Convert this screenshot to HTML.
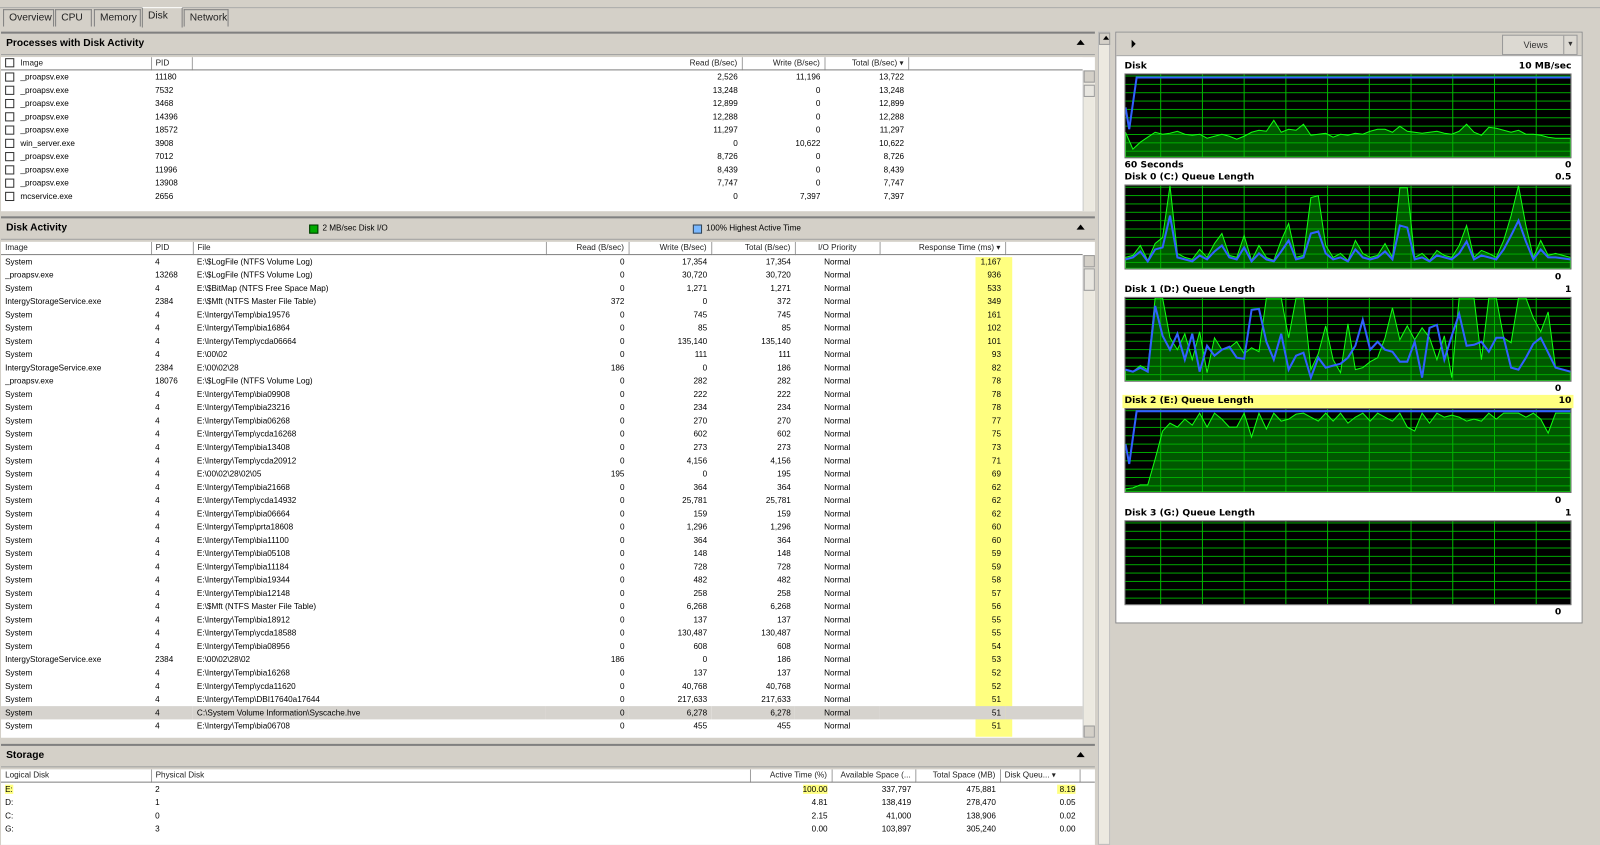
<!DOCTYPE html><html><head><meta charset="utf-8"><style>
*{box-sizing:border-box;margin:0;padding:0}
html,body{width:1600px;height:845px;overflow:hidden;background:#d4d0c8}
#w{position:absolute;left:0;top:0;width:1568px;height:828px;transform:scale(1.0204);transform-origin:0 0;font-family:"Liberation Sans",sans-serif;font-size:8px;color:#000}
.a{position:absolute}
.tab{position:absolute;top:9px;height:17px;border:1px solid #808080;border-bottom:none;background:#d4d0c8;font-size:10px;line-height:16px;padding-left:5px;color:#222}
.ph{position:absolute;left:1px;width:1072px;height:23px;background:#d4d0c8;border-top:2px solid #808080;border-bottom:1px solid #a0a0a0;font-weight:bold;font-size:10px;line-height:20px;padding-left:5px}
.ph .up{position:absolute;right:10px;top:6px;width:0;height:0;border-left:4px solid transparent;border-right:4px solid transparent;border-bottom:5px solid #000}
.box{position:absolute;left:1px;width:1072px;background:#fff;overflow:hidden}
table{border-collapse:collapse;table-layout:fixed;font-size:8px}
td{height:13px;line-height:13px;white-space:nowrap;overflow:hidden;padding:0 4px}
.ch td{background:#fff;border-right:1px solid #a0a0a0;border-bottom:1px solid #808080;height:12px;line-height:11px;color:#222}
.r{text-align:right}.c{text-align:center}
.cb{display:inline-block;width:9px;height:9px;border:1px solid #333;vertical-align:-2px;margin-right:6px;background:#fff}
.sb{position:absolute;width:12px;background:#ece9e0;border-left:1px solid #ccc}
.sbb{position:absolute;left:0;width:11px;height:12px;background:#d4d0c8;border:1px solid #999}
.hl{background:#ffff80}
.gl{position:absolute;left:1102px;font-weight:bold;font-size:9px;font-family:"DejaVu Sans",sans-serif;width:438px}
.gl span{position:absolute;right:0}
.g{position:absolute;left:1102px;width:438px;height:83px;background-color:#000;border:1px solid #777;
background-image:linear-gradient(90deg,#0b0 1px,transparent 1px),linear-gradient(#0a0 1px,transparent 1px);
background-size:40.9px 100%,100% 8.2px;background-position:34px 0,0 1px}
.g svg{position:absolute;left:0;top:0;width:100%;height:100%}
</style></head><body><div id="w">
<div class="a" style="left:0;top:0;width:1568px;height:8px;background:#d4d0c8;border-bottom:1px solid #aaa"></div>
<div class="tab" style="left:3px;width:50px">Overview</div>
<div class="tab" style="left:54px;width:36px">CPU</div>
<div class="tab" style="left:92px;width:46px">Memory</div>
<div class="tab" style="left:139px;width:40px;top:7px;height:20px;border-color:#fff #808080;background:#d4d0c8">Disk</div>
<div class="tab" style="left:180px;width:44px">Network</div>

<!-- Processes -->
<div class="ph" style="top:31px">Processes with Disk Activity<div class="up"></div></div>
<div class="box" style="top:56px;height:151px">
<table style="width:1060px"><colgroup><col style="width:147px"><col style="width:40px"><col style="width:539px"><col style="width:81px"><col style="width:82px"><col style="width:171px"></colgroup>
<tr class="ch"><td><span class="cb"></span>Image</td><td>PID</td><td class="r">Read (B/sec)</td><td class="r">Write (B/sec)</td><td class="r">Total (B/sec) ▾</td><td style="border-right:none"></td></tr>
<tr><td><span class="cb"></span>_proapsv.exe</td><td>11180</td><td class="r">2,526</td><td class="r">11,196</td><td class="r">13,722</td><td></td></tr>
<tr><td><span class="cb"></span>_proapsv.exe</td><td>7532</td><td class="r">13,248</td><td class="r">0</td><td class="r">13,248</td><td></td></tr>
<tr><td><span class="cb"></span>_proapsv.exe</td><td>3468</td><td class="r">12,899</td><td class="r">0</td><td class="r">12,899</td><td></td></tr>
<tr><td><span class="cb"></span>_proapsv.exe</td><td>14396</td><td class="r">12,288</td><td class="r">0</td><td class="r">12,288</td><td></td></tr>
<tr><td><span class="cb"></span>_proapsv.exe</td><td>18572</td><td class="r">11,297</td><td class="r">0</td><td class="r">11,297</td><td></td></tr>
<tr><td><span class="cb"></span>win_server.exe</td><td>3908</td><td class="r">0</td><td class="r">10,622</td><td class="r">10,622</td><td></td></tr>
<tr><td><span class="cb"></span>_proapsv.exe</td><td>7012</td><td class="r">8,726</td><td class="r">0</td><td class="r">8,726</td><td></td></tr>
<tr><td><span class="cb"></span>_proapsv.exe</td><td>11996</td><td class="r">8,439</td><td class="r">0</td><td class="r">8,439</td><td></td></tr>
<tr><td><span class="cb"></span>_proapsv.exe</td><td>13908</td><td class="r">7,747</td><td class="r">0</td><td class="r">7,747</td><td></td></tr>
<tr><td><span class="cb"></span>mcservice.exe</td><td>2656</td><td class="r">0</td><td class="r">7,397</td><td class="r">7,397</td><td></td></tr>
</table>
<div class="sb" style="left:1060px;top:13px;height:138px"><div class="sbb" style="top:0"></div><div class="sbb" style="top:14px;background:#e8e6e0"></div></div>
</div>

<!-- Disk Activity -->
<div class="ph" style="top:212px">Disk Activity<div class="up"></div>
<span class="a" style="left:302px;top:6px;width:9px;height:9px;background:#0a0;border:1px solid #030"></span><span class="a" style="left:315px;top:0;font-weight:normal;font-size:8px">2 MB/sec Disk I/O</span>
<span class="a" style="left:678px;top:6px;width:9px;height:9px;background:#7ab8ff;border:1px solid #345"></span><span class="a" style="left:691px;top:0;font-weight:normal;font-size:8px">100% Highest Active Time</span></div>
<div class="box" style="top:237px;height:486px">
<div class="a" style="left:955px;top:15px;width:36px;height:470px;background:#ffff80"></div>
<table style="width:1060px;position:relative"><colgroup><col style="width:147px"><col style="width:41px"><col style="width:346px"><col style="width:81px"><col style="width:81px"><col style="width:82px"><col style="width:83px"><col style="width:123px"><col style="width:76px"></colgroup>
<tr class="ch"><td>Image</td><td>PID</td><td>File</td><td class="r">Read (B/sec)</td><td class="r">Write (B/sec)</td><td class="r">Total (B/sec)</td><td class="c">I/O Priority</td><td class="r">Response Time (ms) ▾</td><td style="border-right:none"></td></tr>
<tr><td>System</td><td>4</td><td>E:\$LogFile (NTFS Volume Log)</td><td class="r">0</td><td class="r">17,354</td><td class="r">17,354</td><td class="c">Normal</td><td class="r">1,167</td><td></td></tr>
<tr><td>_proapsv.exe</td><td>13268</td><td>E:\$LogFile (NTFS Volume Log)</td><td class="r">0</td><td class="r">30,720</td><td class="r">30,720</td><td class="c">Normal</td><td class="r">936</td><td></td></tr>
<tr><td>System</td><td>4</td><td>E:\$BitMap (NTFS Free Space Map)</td><td class="r">0</td><td class="r">1,271</td><td class="r">1,271</td><td class="c">Normal</td><td class="r">533</td><td></td></tr>
<tr><td>IntergyStorageService.exe</td><td>2384</td><td>E:\$Mft (NTFS Master File Table)</td><td class="r">372</td><td class="r">0</td><td class="r">372</td><td class="c">Normal</td><td class="r">349</td><td></td></tr>
<tr><td>System</td><td>4</td><td>E:\Intergy\Temp\bia19576</td><td class="r">0</td><td class="r">745</td><td class="r">745</td><td class="c">Normal</td><td class="r">161</td><td></td></tr>
<tr><td>System</td><td>4</td><td>E:\Intergy\Temp\bia16864</td><td class="r">0</td><td class="r">85</td><td class="r">85</td><td class="c">Normal</td><td class="r">102</td><td></td></tr>
<tr><td>System</td><td>4</td><td>E:\Intergy\Temp\ycda06664</td><td class="r">0</td><td class="r">135,140</td><td class="r">135,140</td><td class="c">Normal</td><td class="r">101</td><td></td></tr>
<tr><td>System</td><td>4</td><td>E:\00\02</td><td class="r">0</td><td class="r">111</td><td class="r">111</td><td class="c">Normal</td><td class="r">93</td><td></td></tr>
<tr><td>IntergyStorageService.exe</td><td>2384</td><td>E:\00\02\28</td><td class="r">186</td><td class="r">0</td><td class="r">186</td><td class="c">Normal</td><td class="r">82</td><td></td></tr>
<tr><td>_proapsv.exe</td><td>18076</td><td>E:\$LogFile (NTFS Volume Log)</td><td class="r">0</td><td class="r">282</td><td class="r">282</td><td class="c">Normal</td><td class="r">78</td><td></td></tr>
<tr><td>System</td><td>4</td><td>E:\Intergy\Temp\bia09908</td><td class="r">0</td><td class="r">222</td><td class="r">222</td><td class="c">Normal</td><td class="r">78</td><td></td></tr>
<tr><td>System</td><td>4</td><td>E:\Intergy\Temp\bia23216</td><td class="r">0</td><td class="r">234</td><td class="r">234</td><td class="c">Normal</td><td class="r">78</td><td></td></tr>
<tr><td>System</td><td>4</td><td>E:\Intergy\Temp\bia06268</td><td class="r">0</td><td class="r">270</td><td class="r">270</td><td class="c">Normal</td><td class="r">77</td><td></td></tr>
<tr><td>System</td><td>4</td><td>E:\Intergy\Temp\ycda16268</td><td class="r">0</td><td class="r">602</td><td class="r">602</td><td class="c">Normal</td><td class="r">75</td><td></td></tr>
<tr><td>System</td><td>4</td><td>E:\Intergy\Temp\bia13408</td><td class="r">0</td><td class="r">273</td><td class="r">273</td><td class="c">Normal</td><td class="r">73</td><td></td></tr>
<tr><td>System</td><td>4</td><td>E:\Intergy\Temp\ycda20912</td><td class="r">0</td><td class="r">4,156</td><td class="r">4,156</td><td class="c">Normal</td><td class="r">71</td><td></td></tr>
<tr><td>System</td><td>4</td><td>E:\00\02\28\02\05</td><td class="r">195</td><td class="r">0</td><td class="r">195</td><td class="c">Normal</td><td class="r">69</td><td></td></tr>
<tr><td>System</td><td>4</td><td>E:\Intergy\Temp\bia21668</td><td class="r">0</td><td class="r">364</td><td class="r">364</td><td class="c">Normal</td><td class="r">62</td><td></td></tr>
<tr><td>System</td><td>4</td><td>E:\Intergy\Temp\ycda14932</td><td class="r">0</td><td class="r">25,781</td><td class="r">25,781</td><td class="c">Normal</td><td class="r">62</td><td></td></tr>
<tr><td>System</td><td>4</td><td>E:\Intergy\Temp\bia06664</td><td class="r">0</td><td class="r">159</td><td class="r">159</td><td class="c">Normal</td><td class="r">62</td><td></td></tr>
<tr><td>System</td><td>4</td><td>E:\Intergy\Temp\prta18608</td><td class="r">0</td><td class="r">1,296</td><td class="r">1,296</td><td class="c">Normal</td><td class="r">60</td><td></td></tr>
<tr><td>System</td><td>4</td><td>E:\Intergy\Temp\bia11100</td><td class="r">0</td><td class="r">364</td><td class="r">364</td><td class="c">Normal</td><td class="r">60</td><td></td></tr>
<tr><td>System</td><td>4</td><td>E:\Intergy\Temp\bia05108</td><td class="r">0</td><td class="r">148</td><td class="r">148</td><td class="c">Normal</td><td class="r">59</td><td></td></tr>
<tr><td>System</td><td>4</td><td>E:\Intergy\Temp\bia11184</td><td class="r">0</td><td class="r">728</td><td class="r">728</td><td class="c">Normal</td><td class="r">59</td><td></td></tr>
<tr><td>System</td><td>4</td><td>E:\Intergy\Temp\bia19344</td><td class="r">0</td><td class="r">482</td><td class="r">482</td><td class="c">Normal</td><td class="r">58</td><td></td></tr>
<tr><td>System</td><td>4</td><td>E:\Intergy\Temp\bia12148</td><td class="r">0</td><td class="r">258</td><td class="r">258</td><td class="c">Normal</td><td class="r">57</td><td></td></tr>
<tr><td>System</td><td>4</td><td>E:\$Mft (NTFS Master File Table)</td><td class="r">0</td><td class="r">6,268</td><td class="r">6,268</td><td class="c">Normal</td><td class="r">56</td><td></td></tr>
<tr><td>System</td><td>4</td><td>E:\Intergy\Temp\bia18912</td><td class="r">0</td><td class="r">137</td><td class="r">137</td><td class="c">Normal</td><td class="r">55</td><td></td></tr>
<tr><td>System</td><td>4</td><td>E:\Intergy\Temp\ycda18588</td><td class="r">0</td><td class="r">130,487</td><td class="r">130,487</td><td class="c">Normal</td><td class="r">55</td><td></td></tr>
<tr><td>System</td><td>4</td><td>E:\Intergy\Temp\bia08956</td><td class="r">0</td><td class="r">608</td><td class="r">608</td><td class="c">Normal</td><td class="r">54</td><td></td></tr>
<tr><td>IntergyStorageService.exe</td><td>2384</td><td>E:\00\02\28\02</td><td class="r">186</td><td class="r">0</td><td class="r">186</td><td class="c">Normal</td><td class="r">53</td><td></td></tr>
<tr><td>System</td><td>4</td><td>E:\Intergy\Temp\bia16268</td><td class="r">0</td><td class="r">137</td><td class="r">137</td><td class="c">Normal</td><td class="r">52</td><td></td></tr>
<tr><td>System</td><td>4</td><td>E:\Intergy\Temp\ycda11620</td><td class="r">0</td><td class="r">40,768</td><td class="r">40,768</td><td class="c">Normal</td><td class="r">52</td><td></td></tr>
<tr><td>System</td><td>4</td><td>E:\Intergy\Temp\DBI17640a17644</td><td class="r">0</td><td class="r">217,633</td><td class="r">217,633</td><td class="c">Normal</td><td class="r">51</td><td></td></tr>
<tr style="background:#d6d3ce"><td>System</td><td>4</td><td>C:\System Volume Information\Syscache.hve</td><td class="r">0</td><td class="r">6,278</td><td class="r">6,278</td><td class="c">Normal</td><td class="r">51</td><td></td></tr>
<tr><td>System</td><td>4</td><td>E:\Intergy\Temp\bia06708</td><td class="r">0</td><td class="r">455</td><td class="r">455</td><td class="c">Normal</td><td class="r">51</td><td></td></tr>
</table>
<div class="sb" style="left:1060px;top:13px;height:473px"><div class="sbb" style="top:0"></div><div class="sbb" style="top:13px;height:22px;background:#e8e6e0"></div><div class="sbb" style="top:461px"></div></div>
</div>

<!-- Storage -->
<div class="ph" style="top:729px">Storage<div class="up"></div></div>
<div class="box" style="top:754px;height:74px">
<table style="width:1072px"><colgroup><col style="width:147px"><col style="width:587px"><col style="width:80px"><col style="width:82px"><col style="width:83px"><col style="width:78px"><col style="width:15px"></colgroup>
<tr class="ch"><td>Logical Disk</td><td>Physical Disk</td><td class="r">Active Time (%)</td><td class="r">Available Space (...</td><td class="r">Total Space (MB)</td><td>Disk Queu... ▾</td><td style="border-right:none"></td></tr>
<tr><td><span class="hl">E:</span></td><td>2</td><td class="r"><span class="hl">100.00</span></td><td class="r">337,797</td><td class="r">475,881</td><td class="r"><span class="hl">&nbsp;8.19</span></td><td></td></tr>
<tr><td>D:</td><td>1</td><td class="r">4.81</td><td class="r">138,419</td><td class="r">278,470</td><td class="r">0.05</td><td></td></tr>
<tr><td>C:</td><td>0</td><td class="r">2.15</td><td class="r">41,000</td><td class="r">138,906</td><td class="r">0.02</td><td></td></tr>
<tr><td>G:</td><td>3</td><td class="r">0.00</td><td class="r">103,897</td><td class="r">305,240</td><td class="r">0.00</td><td></td></tr>
</table></div>

<!-- splitter -->
<div class="a" style="left:1076px;top:31px;width:12px;height:797px;background:#ece9e0;border:1px solid #bbb"><div class="sbb" style="top:0;left:0"></div></div>
<div class="a" style="left:1081px;top:35px;width:0;height:0;border-left:3px solid transparent;border-right:3px solid transparent;border-bottom:4px solid #000"></div>

<!-- right panel -->
<div class="a" style="left:1093px;top:31px;width:458px;height:580px;border:1px solid #888;background:#fff"></div>
<div class="a" style="left:1094px;top:32px;width:456px;height:23px;background:#d4d0c8;border-bottom:1px solid #aaa"></div>
<div class="a" style="left:1109px;top:39px;width:0;height:0;border-top:4px solid transparent;border-bottom:4px solid transparent;border-left:4px solid #000"></div>
<div class="a" style="left:1472px;top:34px;width:74px;height:20px;background:#dcd9d2;border:1px solid #999;font-size:9px;line-height:18px;padding-left:20px;color:#333">Views<span style="position:absolute;right:0;top:0;width:13px;height:18px;border-left:1px solid #999;font-size:7px;text-align:center">▼</span></div>
<div class="a" style="left:1552px;top:31px;width:16px;height:797px;background:#d4d0c8"></div>

<div class="gl" style="top:60px">Disk<span>10 MB/sec</span></div>
<div class="g" style="top:72px"><svg viewBox="0 0 60 83" preserveAspectRatio="none">
<polygon fill="#00b000" fill-opacity=".5" stroke="#1f1" stroke-width="1" vector-effect="non-scaling-stroke" points="0,83 0,58 1,75 2,68 3,63 4,58 5,60 6,59 7,57 8,60 9,61 10,60 11,64 12,62 13,60 14,62 15,65 16,62 17,58 18,56 19,57 20,46 21,58 22,55 23,56 24,50 25,61 26,60 27,59 28,63 29,60 30,61 31,59 32,60 33,57 34,55 35,55 36,58 37,52 38,57 39,58 40,59 41,58 42,57 43,59 44,60 45,57 46,50 47,58 48,61 49,53 50,54 51,56 52,58 53,56 54,60 55,60 56,61 57,63 58,64 60,64 60,83"/>
<polyline fill="none" stroke="#3060ff" stroke-width="2" vector-effect="non-scaling-stroke" points="0,33 .5,55 1.5,3 60,3"/></svg></div>
<div class="gl" style="top:157px">60 Seconds<span>0</span></div>
<div class="gl" style="top:169px">Disk 0 (C:) Queue Length<span>0.5</span></div>
<div class="g" style="top:181px"><svg viewBox="0 0 60 83" preserveAspectRatio="none">
<polygon fill="#00b000" fill-opacity=".5" stroke="#1f1" stroke-width="1" vector-effect="non-scaling-stroke" points="0,83 0,72 1,70 2,60 3,75 4,58 5,52 6,0 7,68 8,72 9,74 10,64 11,72 12,58 13,48 14,70 15,72 16,50 17,75 18,60 19,72 20,75 21,55 22,38 23,72 24,70 25,12 26,10 27,60 28,72 29,68 30,75 31,55 32,68 33,72 34,70 35,58 36,72 37,2 38,2 39,72 40,68 41,75 42,65 43,70 44,72 45,60 46,40 47,72 48,65 49,68 50,72 51,55 52,30 53,0 54,40 55,72 56,55 57,70 58,68 60,72 60,83"/>
<polyline fill="none" stroke="#3060ff" stroke-width="2" vector-effect="non-scaling-stroke" points="0,74 1,72 2,66 3,76 4,64 5,62 6,30 7,72 8,74 9,76 10,70 11,74 12,66 13,60 14,72 15,74 16,62 17,76 18,68 19,74 20,76 21,66 22,55 23,74 24,72 25,48 26,46 27,68 28,74 29,72 30,76 31,64 32,72 33,74 34,72 35,66 36,74 37,40 38,42 39,74 40,72 41,76 42,70 43,72 44,74 45,68 46,56 47,74 48,70 49,72 50,74 51,64 52,50 53,35 54,56 55,74 56,64 57,72 58,72 60,74"/></svg></div>
<div class="gl" style="top:267px;left:1540px;width:auto;margin-left:-10px"><span>0</span></div>
<div class="gl" style="top:279px">Disk 1 (D:) Queue Length<span>1</span></div>
<div class="g" style="top:291px"><svg viewBox="0 0 60 83" preserveAspectRatio="none">
<polygon fill="#00b000" fill-opacity=".5" stroke="#1f1" stroke-width="1" vector-effect="non-scaling-stroke" points="0,83 0,72 1,74 2,68 3,72 4,0 5,0 6,40 7,52 8,36 9,62 10,34 11,75 12,40 13,52 14,50 15,44 16,56 17,50 18,54 19,0 20,0 21,0 22,40 23,0 24,0 25,72 26,56 27,28 28,62 29,75 30,26 31,72 32,70 33,64 34,60 35,40 36,10 37,42 38,28 39,42 40,30 41,40 42,62 43,38 44,80 45,0 46,0 47,0 48,62 49,0 50,0 51,40 52,45 53,0 54,0 55,20 56,34 57,14 58,70 60,74 60,83"/>
<polyline fill="none" stroke="#3060ff" stroke-width="2" vector-effect="non-scaling-stroke" points="0,72 1,74 2,70 3,74 4,8 5,38 6,52 7,36 8,62 9,36 10,74 11,48 12,58 13,52 14,49 15,60 16,61 17,12 18,11 19,44 20,62 21,36 22,72 23,58 24,55 25,80 26,60 27,70 28,68 29,66 30,60 31,48 32,22 33,52 34,44 35,52 36,54 37,64 38,64 39,44 40,80 41,30 42,27 43,62 44,38 45,16 46,48 47,47 48,44 49,54 50,40 51,40 52,70 53,72 54,60 55,46 56,40 57,55 58,70 60,74"/></svg></div>
<div class="gl" style="top:376px;left:1540px;width:auto;margin-left:-10px"><span>0</span></div>
<div class="gl" style="top:387px;height:13px;background:#ffff80;left:1100px;width:442px;padding-left:2px;line-height:13px">Disk 2 (E:) Queue Length<span style="right:2px">10</span></div>
<div class="g" style="top:400px"><svg viewBox="0 0 60 83" preserveAspectRatio="none">
<polygon fill="#00b000" fill-opacity=".5" stroke="#1f1" stroke-width="1" vector-effect="non-scaling-stroke" points="0,83 0,80 1,79 2,76 3,76 4,50 5,22 6,14 7,18 8,10 9,16 10,4 11,18 12,4 13,10 14,18 15,18 16,4 17,28 18,4 19,20 20,4 21,12 22,10 23,5 24,4 25,8 26,12 27,4 28,12 29,4 30,14 31,8 32,4 33,12 34,4 35,8 36,12 37,4 38,18 39,22 40,4 41,14 42,4 43,8 44,6 45,8 46,12 47,10 48,12 49,4 50,10 51,4 52,4 53,4 54,8 55,4 56,10 57,24 58,4 60,4 60,83"/>
<polyline fill="none" stroke="#3060ff" stroke-width="2" vector-effect="non-scaling-stroke" points="0,35 .5,55 1.5,2 60,2"/></svg></div>
<div class="gl" style="top:486px;left:1540px;width:auto;margin-left:-10px"><span>0</span></div>
<div class="gl" style="top:498px">Disk 3 (G:) Queue Length<span>1</span></div>
<div class="g" style="top:510px"></div>
<div class="gl" style="top:595px;left:1540px;width:auto;margin-left:-10px"><span>0</span></div>
</div></body></html>
